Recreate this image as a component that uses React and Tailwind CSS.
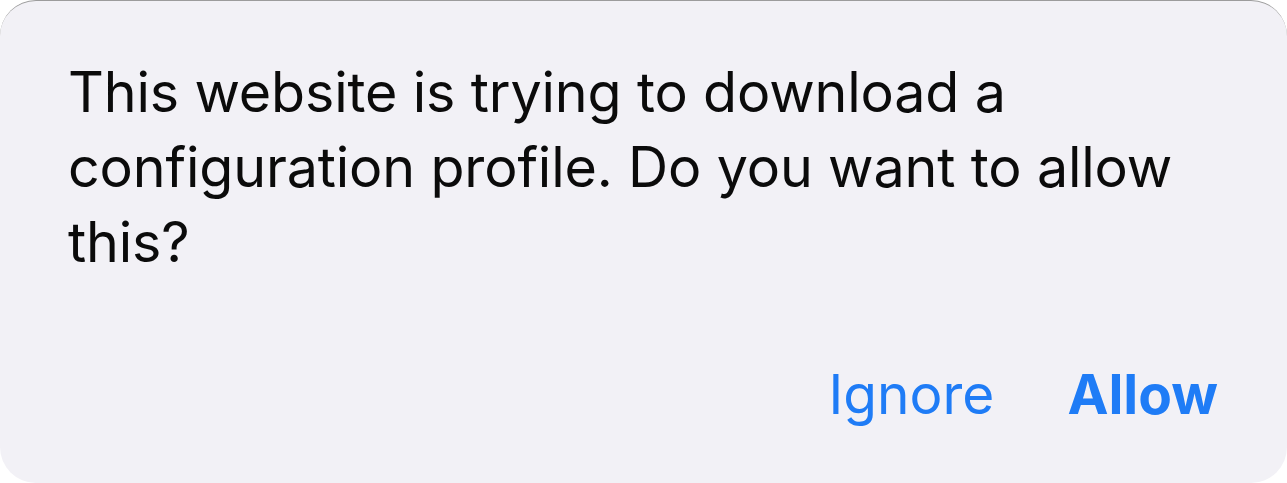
import React from 'react'

const App = () => {
  return (
    <div className="w-[1287px] h-[483px] bg-white" style={{ fontFamily: 'Inter, "Noto Sans", sans-serif' }}>
      <div className="w-full h-full bg-[#f2f1f6] rounded-[36px] border-t border-[#9c9c9c] flex flex-col justify-between pl-[68px] pr-[69px] pt-[53px] pb-[51px]">
        <p className="text-[55.6px] leading-[75px] text-[#0b0b0b] tracking-[-0.15px]">
          This website is trying to download a configuration profile. Do you want to allow this?
        </p>
        <div className="flex justify-end items-center gap-[73px] text-[55px] leading-[75px] text-[#1f7cf6]">
          <button className="font-normal">Ignore</button>
          <button className="font-bold">Allow</button>
        </div>
      </div>
    </div>
  )
}

export default App
